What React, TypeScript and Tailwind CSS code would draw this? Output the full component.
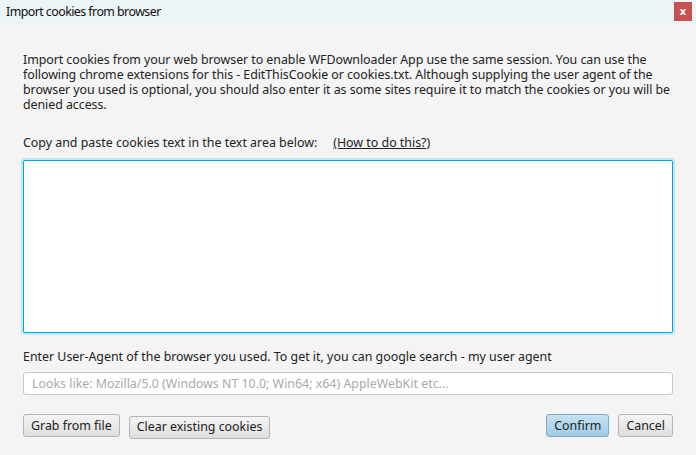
import React from "react"

const font = { fontFamily: '"Noto Sans", "Open Sans", sans-serif' }

const Btn = ({ children, primary }: { children: React.ReactNode; primary?: boolean }) => (
    <button
        className={
            primary
                ? "h-[23px] px-[7px] rounded-[3px] border border-[#7fa9c4] bg-gradient-to-b from-[#c4e2f2] to-[#9ecde5] text-[12.4px] text-[#222] leading-none"
                : "h-[23px] px-[7px] rounded-[3px] border border-[#b4b4b4] bg-gradient-to-b from-[#f4f4f4] to-[#dedede] text-[12.4px] text-[#222] leading-none"
        }
    >
        {children}
    </button>
)

export default function App() {
    return (
        <div className="w-[696px] h-[455px] bg-[#f4f4f4] flex flex-col text-[#222]" style={font}>
            <div className="h-[25px] bg-[#ebf4f6] flex items-center justify-between pl-[6px] pr-[4px] shrink-0">
                <span className="text-[12.4px] tracking-[-0.55px] text-[#111]">Import cookies from browser</span>
                <div className="w-[18px] h-[19px] bg-[#c75050] text-white text-[11px] font-bold flex items-center justify-center mt-[-2px]">
                    x
                </div>
            </div>
            <div className="flex flex-col px-[23px] pt-[27px]">
                <p className="text-[12.4px] leading-[15px] tracking-[-0.05px] whitespace-nowrap">
                    Import cookies from your web browser to enable WFDownloader App use the same session. You can use the
                    <br />
                    following chrome extensions for this - EditThisCookie or cookies.txt. Although supplying the user agent of the
                    <br />
                    browser you used is optional, you should also enter it as some sites require it to match the cookies or you will be
                    <br />
                    denied access.
                </p>
                <div className="mt-[23px] text-[12.4px] leading-[15px] flex">
                    <span>Copy and paste cookies text in the text area below:</span>
                    <span className="ml-[16px] underline">(How to do this?)</span>
                </div>
                <textarea className="mt-[10px] h-[173px] w-full bg-white border border-[#00a8e0] rounded-[2px] outline-none resize-none shadow-[0_0_0_2px_#bfe6f5]" />
                <div className="mt-[16px] text-[12.4px] leading-[15px]">
                    Enter User-Agent of the browser you used. To get it, you can google search - my user agent
                </div>
                <input
                    className="mt-[8px] h-[23px] w-full bg-white border border-[#c8c8c8] rounded-[3px] px-[8px] text-[12.4px] outline-none placeholder:text-[#aaa]"
                    placeholder="Looks like: Mozilla/5.0 (Windows NT 10.0; Win64; x64) AppleWebKit etc..."
                />
                <div className="mt-[18px] flex items-center">
                    <Btn>Grab from file</Btn>
                    <div className="ml-[9px]">
                        <Btn>Clear existing cookies</Btn>
                    </div>
                    <div className="ml-auto flex gap-[9px]">
                        <Btn primary>Confirm</Btn>
                        <Btn>Cancel</Btn>
                    </div>
                </div>
            </div>
        </div>
    )
}
